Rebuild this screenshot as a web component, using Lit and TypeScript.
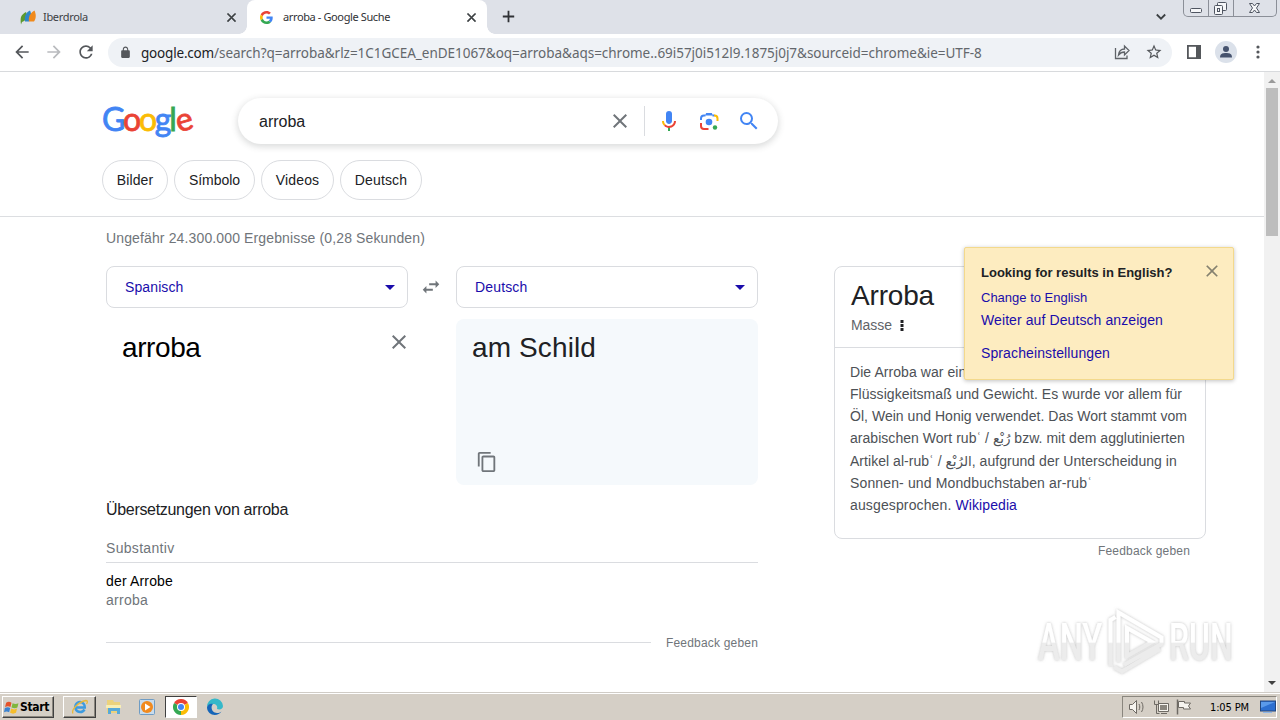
import { LitElement, html, css } from "lit";
import { customElement } from "lit/decorators.js";

const CLOSE = "M19 6.41L17.59 5 12 10.59 6.41 5 5 6.41 10.59 12 5 17.59 6.41 19 12 13.41 17.59 19 19 17.59 13.41 12z";
const BACK = "M20 11H7.83l5.59-5.59L12 4l-8 8 8 8 1.41-1.41L7.83 13H20v-2z";
const RELOAD = "M17.65 6.35A7.958 7.958 0 0012 4c-4.42 0-7.99 3.58-7.99 8s3.57 8 7.99 8c3.73 0 6.84-2.55 7.73-6h-2.08A5.99 5.99 0 0112 18c-3.31 0-6-2.69-6-6s2.69-6 6-6c1.66 0 3.14.69 4.22 1.78L13 11h7V4l-2.35 2.35z";
const LOCK = "M18 8h-1V6c0-2.76-2.24-5-5-5S7 3.24 7 6v2H6c-1.1 0-2 .9-2 2v10c0 1.1.9 2 2 2h12c1.1 0 2-.9 2-2V10c0-1.1-.9-2-2-2zM9 6c0-1.66 1.34-3 3-3s3 1.34 3 3v2H9z";
const STAR = "M22 9.24l-7.19-.62L12 2 9.19 8.63 2 9.24l5.46 4.73L5.82 21 12 17.27 18.18 21l-1.63-7.03L22 9.24zM12 15.4l-3.76 2.27 1-4.28-3.32-2.88 4.38-.38L12 6.1l1.71 4.04 4.38.38-3.32 2.88 1 4.28L12 15.4z";
const COPY = "M16 1H4c-1.1 0-2 .9-2 2v14h2V3h12V1zm3 4H8c-1.1 0-2 .9-2 2v14c0 1.1.9 2 2 2h11c1.1 0 2-.9 2-2V7c0-1.1-.9-2-2-2zm0 16H8V7h11v14z";
const SEARCH = "M15.5 14h-.79l-.28-.27A6.471 6.471 0 0016 9.5 6.5 6.5 0 109.5 16c1.61 0 3.09-.59 4.23-1.57l.27.28v.79l5 4.99L20.49 19l-4.99-5zm-6 0C7.01 14 5 11.99 5 9.5S7.01 5 9.5 5 14 7.01 14 9.5 11.99 14 9.5 14z";
const SWAP = "M6.99 11L3 15l3.99 4v-3H14v-2H6.99v-3zM21 9l-3.99-4v3H10v2h7.01v3L21 9z";

const icon = (cls: string, size: number, d: string) =>
  html`<svg class=${cls} width=${size} height=${size} viewBox="0 0 24 24" fill="currentColor"><path d=${d} /></svg>`;

const t = (cls: string, text: unknown) => html`<span class="t ${cls}">${text}</span>`;

@customElement("app-root")
export class AppRoot extends LitElement {
  static styles = css`
    :host { display: flex; flex-direction: column; width: 1280px; height: 720px; overflow: hidden; background: #fff;
      font-family: "Liberation Sans", Arial, sans-serif; font-size: 14px; color: #202124; }
    * { box-sizing: border-box; }
    svg { display: block; flex: none; }
    .t { white-space: pre; flex: none; }
    .grow { flex: 1; }

    .tt1 { letter-spacing: -.31px; } .tt2 { letter-spacing: -.38px; }
    .k1 { letter-spacing: .1px; } .k2 { letter-spacing: -.05px; } .k3, .k4, .s2 { letter-spacing: .16px; }
    .st { letter-spacing: .133px; } .s1 { letter-spacing: .113px; }
    .a1 { letter-spacing: -.4px; } .a2 { letter-spacing: .118px; }
    .h1 { letter-spacing: -.311px; } .h2 { letter-spacing: .313px; } .h3 { letter-spacing: .163px; } .h4 { letter-spacing: .255px; }
    .f { letter-spacing: .185px; }
    .ti { letter-spacing: -.174px; } .ki { letter-spacing: -.047px; }
    .p1 { letter-spacing: .064px; } .p2 { letter-spacing: .041px; } .p3 { letter-spacing: .028px; } .p4 { letter-spacing: .035px; }
    .p5 { letter-spacing: .035px; } .p6 { letter-spacing: .136px; } .p7 { letter-spacing: .131px; } .link { letter-spacing: .089px; color: #1a0dab; }
    .w2 { letter-spacing: .092px; } .w3 { letter-spacing: .112px; }
    .sta { letter-spacing: -.34px; }

    .tabs { display: flex; height: 34px; flex: none; background: #dee1e8; font: 11px "Noto Sans", sans-serif; color: #3c4043; }
    .tab { display: flex; align-items: center; height: 34px; }
    .tab1 { width: 247px; padding-left: 20px; }
    .tab .t { margin-bottom: 2px; }
    .tab1 .t { margin-left: 7px; }
    .tab2 { position: relative; width: 240px; padding-left: 13px; background: #fff; border-radius: 8px 8px 0 0; color: #2f3134; }
    .tab2::before, .tab2::after { content: ""; position: absolute; bottom: 0; width: 8px; height: 8px; }
    .tab2::before { left: -8px; background: radial-gradient(circle at 0 0, transparent 7.5px, #fff 8px); }
    .tab2::after { right: -8px; background: radial-gradient(circle at 100% 0, transparent 7.5px, #fff 8px); }
    .tab2 .t { margin-left: 10px; }
    .x { margin-left: auto; margin-right: 8px; color: #3c4043; stroke: currentColor; stroke-width: .8; }
    .plus { margin: 10px 0 0 15px; }
    .chev { margin: 13px 17px 0 0; }
    .winbtns { display: flex; width: 94px; height: 17px; margin-right: 3px; border: 1px solid #8b8f98; border-top: 0; border-radius: 0 0 5px 5px; }

    .toolbar { display: flex; align-items: center; height: 38px; flex: none; padding: 0 0 1px 12px; border-bottom: 1px solid #d8dadd; color: #54575b; }
    .toolbar .fwd { margin-left: 12px; color: #b9bbbe; }
    .toolbar .rel { margin-left: 12px; }
    .omni { display: flex; align-items: center; width: 1064px; height: 29px; margin-left: 12px; padding-left: 11px; border-radius: 15px; background: #eff2f6; font: 13.5px "Noto Sans", sans-serif; }
    .omni .t { margin-top: 2px; }
    .host { margin-left: 9px; color: #202124; letter-spacing: -.19px; }
    .path { color: #63676c; letter-spacing: -.03px; }
    .share { margin-right: 15px; }
    .omni .star { margin-right: 9px; }
    .side { margin-left: 14px; }
    .avatar { margin-left: 13px; }
    .dots { margin-left: 19px; }

    .view { display: flex; height: 620px; flex: none; }
    .page { position: relative; width: 1264px; }
    .bar { display: flex; flex-direction: column; align-items: center; justify-content: space-between; width: 16px; background: #f1f1f1; }
    .thumb { width: 12px; height: 148px; background: #bdbdbd; }
    .rest { flex: 1; }

    .head { height: 145px; border-bottom: 1px solid #dcdee1; padding: 26px 0 0 102px; }
    .row { display: flex; }
    .logo { width: 92px; height: 46px; font: 32px/41px Lato, sans-serif; white-space: nowrap; letter-spacing: -2.2px; -webkit-text-stroke: .8px; }
    .b { color: #4285f4; } .r { color: #ea4335; } .y { color: #fbbc05; } .g { color: #34a853; }
    .e { display: inline-block; transform: rotate(-16deg); }
    .search { display: flex; align-items: center; width: 540px; height: 46px; margin-left: 44px; padding: 0 17px 0 21px; border-radius: 23px; box-shadow: 0 2px 6px 1px rgba(60,64,67,.18); font-size: 16px; }
    .sq { margin-top: 1px; }
    .search .clr { color: #70757a; }
    .sep { width: 1px; height: 30px; margin: 0 12px; background: #dadce0; }
    .lens, .mag { margin-left: 16px; }
    .chips { display: flex; gap: 6px; margin-top: 16px; }
    .chip { display: flex; align-items: center; justify-content: center; height: 40px; border: 1px solid #dadce0; border-radius: 20px; }
    .c1 { width: 66px; } .c2 { width: 81px; } .c3 { width: 73px; } .c4 { width: 82px; }

    .body { display: flex; padding-left: 106px; }
    .left { width: 652px; }
    .stats { display: flex; height: 49px; padding-top: 13px; line-height: 16px; color: #70757a; }
    .langs { display: flex; align-items: center; height: 42px; }
    .sel { display: flex; align-items: center; width: 302px; height: 42px; padding: 0 12px 0 18px; border: 1px solid #dadce0; border-radius: 8px; color: #1a0dab; }
    .swap { margin: 0 14px 0 12px; color: #70757a; }
    .boxes { display: flex; justify-content: space-between; margin-top: 11px; }
    .src { display: flex; align-items: flex-start; justify-content: space-between; width: 302px; padding: 13px 0 0 16px; font-size: 28px; line-height: 32px; color: #000; }
    .src svg { margin: -2px -3px 0 0; color: #70757a; }
    .out { display: flex; flex-direction: column; justify-content: space-between; width: 302px; height: 166px; padding: 13px 16px 12px; border-radius: 8px; background: #f5f9fc; font-size: 28px; line-height: 32px; }
    .out svg { margin-left: 4px; color: #70757a; }
    .h { display: flex; margin-top: 15px; font-size: 16px; line-height: 20px; }
    .sub { display: flex; height: 34px; margin-top: 9px; padding-top: 10px; line-height: 18px; color: #70757a; border-bottom: 1px solid #dadce0; }
    .term { display: flex; margin-top: 9px; line-height: 19px; color: #000; }
    .back { display: flex; line-height: 19px; color: #70757a; }
    .fbrow { display: flex; align-items: center; gap: 15px; margin-top: 24px; font-size: 12px; line-height: 18px; color: #70757a; }
    .rule { flex: 1; height: 1px; margin-top: -2px; background: #dadce0; }

    .right { width: 372px; margin: 49px 0 0 76px; }
    .card { height: 273px; border: 1px solid #dadce0; border-radius: 8px; color: #4d5156; }
    .ctop { height: 81px; border-bottom: 1px solid #dadce0; padding: 12px 0 0 16px; color: #202124; }
    .title { display: flex; font-size: 28px; line-height: 34px; }
    .kind { display: flex; align-items: center; gap: 8px; height: 22px; margin-top: 1px; color: #5f6368; }
    .text { padding: 13px 0 0 15px; line-height: 22.12px; }
    .line { display: flex; }
    .ar { font-family: "DejaVu Sans", sans-serif; font-size: 13.5px; line-height: 1; }
    .fb2 { display: flex; justify-content: flex-end; padding: 4px 16px 0 0; font-size: 12px; line-height: 16px; color: #70757a; }

    .pop { position: absolute; left: 964px; top: 175px; width: 270px; height: 133px; padding: 16px 14px 0 16px; border: 1px solid #f3d98c; border-radius: 2px; background: #fdecc0; box-shadow: 0 1px 4px rgba(0,0,0,.25); color: #1a0dab; font-size: 14px; }
    .ptop { display: flex; justify-content: space-between; }
    .q { margin-top: 1px; font-size: 13px; font-weight: bold; line-height: 16px; color: #202124; }
    .pop .cx { margin: -3px -3px 0 0; color: #85816f; }
    .l1 { display: flex; margin-top: 8px; font-size: 13px; line-height: 17px; }
    .l2 { display: flex; margin-top: 5px; line-height: 18px; }
    .l3 { display: flex; margin-top: 15px; line-height: 18px; }
    .wm { position: absolute; left: 1030px; top: 530px; }

    .task { display: flex; align-items: center; height: 28px; flex: none; padding: 1px 3px 0 2px; background: #d5cfc6; border-top: 1px solid #d0ccc6; box-shadow: inset 0 1px #fff; font: 11px "DejaVu Sans Condensed", "DejaVu Sans", sans-serif; color: #000; }
    .btn { display: flex; align-items: center; justify-content: center; height: 22px; border: 1px solid; border-color: #fff #404040 #404040 #fff; box-shadow: inset -1px -1px #8a867e; }
    .start { justify-content: flex-start; width: 52px; padding-left: 1px; gap: 1px; font-size: 12px; font-weight: bold; }
    .ie { width: 33px; margin-left: 9px; }
    .on { width: 32px; background: #fff; border-color: #404040 #fff #fff #404040; box-shadow: none; }
    .m1 { margin: 0 16px 0 9px; } .m2 { margin-right: 10px; } .m3 { margin-left: 9px; }
    .tray { display: flex; align-items: center; width: 155px; height: 22px; padding: 0 0 0 5px; border: 1px solid; border-color: #8a867e #fff #fff #8a867e; }
    .clock { margin: 0 11px 0 16px; letter-spacing: -.13px; }
  `;

  render() {
    return html`
      <div class="tabs">
        <div class="tab tab1">
          <svg width="16" height="16" viewBox="0 0 16 16"><path d="M1 15.500C0 8 1 6 6 3c2 4 1 8-4 10z" fill="#5c9a2e"/><path d="M5 12.500c-1-5 1-9 5-11 2 4 1 8-1 11z" fill="#2f86c8"/><path d="M9 12.500c-1-5 2-9 5.500-11C16.500 6 16 10 14 12.500z" fill="#f08a1c"/></svg>
          ${t("tt1", "Iberdrola")}
          ${icon("x", 15, CLOSE)}
        </div>
        <div class="tab tab2">
          <svg width="13" height="13" viewBox="0 0 48 48"><path fill="#EA4335" d="M24 9.5c3.54 0 6.71 1.22 9.21 3.6l6.85-6.85C35.9 2.38 30.47 0 24 0 14.62 0 6.51 5.38 2.56 13.22l7.98 6.19C12.43 13.72 17.74 9.5 24 9.5z"/><path fill="#4285F4" d="M46.98 24.55c0-1.57-.15-3.09-.38-4.55H24v9.02h12.94c-.58 2.96-2.26 5.48-4.78 7.18l7.73 6c4.51-4.18 7.09-10.36 7.09-17.65z"/><path fill="#FBBC05" d="M10.53 28.59c-.48-1.45-.76-2.99-.76-4.59s.27-3.14.76-4.59l-7.98-6.19C.92 16.46 0 20.12 0 24s.92 7.54 2.56 10.78l7.97-6.19z"/><path fill="#34A853" d="M24 48c6.48 0 11.93-2.13 15.89-5.81l-7.73-6c-2.15 1.45-4.92 2.3-8.16 2.3-6.26 0-11.57-4.22-13.47-9.91l-7.98 6.19C6.51 42.62 14.62 48 24 48z"/></svg>
          ${t("tt2", "arroba - Google Suche")}
          ${icon("x", 15, CLOSE)}
        </div>
        <svg class="plus" width="13" height="13" viewBox="0 0 13 13" stroke="#303236" stroke-width="1.8"><path d="M6.5 .8v11.4M.8 6.5h11.4"/></svg>
        <span class="grow"></span>
        <svg class="chev" width="10" height="8" viewBox="0 0 10 8" fill="none" stroke="#3c4043" stroke-width="1.8"><path d="M.8 1.500L5 5.700 9.200 1.500"/></svg>
        <div class="winbtns">
          <svg width="92" height="16" viewBox="0 0 92 16" fill="none" stroke="#4f5561"><path d="M24.500 0v16M49.500 0v16" stroke="#8b8f98"/><rect x="6.500" y="8.500" width="11" height="4" rx="1" fill="#f5f6f8"/><rect x="33.500" y="2.500" width="9" height="8" rx="1" fill="#f5f6f8"/><rect x="30.500" y="5.500" width="8" height="9" rx="1" fill="#f5f6f8"/><rect x="33.500" y="8.500" width="2" height="3"/><path d="M65.500 3.500h3l2 2.500 2-2.500h3l-3 4.500 3 4.500h-3l-2-2.500-2 2.500h-3l3-4.500z" fill="#f5f6f8"/></svg>
        </div>
      </div>
      <div class="toolbar">
        ${icon("", 20, BACK)}
        <svg class="fwd" width="20" height="20" viewBox="0 0 24 24" fill="currentColor"><path d="M12 4l-1.410 1.410L16.170 11H4v2h12.170l-5.580 5.590L12 20l8-8z"/></svg>
        ${icon("rel", 20, RELOAD)}
        <div class="omni">
          ${icon("", 13, LOCK)}
          ${t("host", "google.com")}${t("path", "/search?q=arroba&rlz=1C1GCEA_enDE1067&oq=arroba&aqs=chrome..69i57j0i512l9.1875j0j7&sourceid=chrome&ie=UTF-8")}
          <span class="grow"></span>
          <svg class="share" width="16" height="16" viewBox="0 0 16 16" fill="none" stroke="#5f6368" stroke-width="1.300"><path d="M1.500 4v10.500h11.500v-3M4.500 11c.5-4 2.500-6 6-6V2l4.500 4.500-4.500 4.500V8c-2.500 0-4.500 1-6 3z"/></svg>
          ${icon("star", 18, STAR)}
        </div>
        <svg class="side" width="16" height="16" viewBox="0 0 16 16"><path d="M1.900 1.900h12.200v12.200H1.900z" fill="none" stroke="#54575b" stroke-width="1.800"/><path d="M10 1h5v14h-5z" fill="#54575b"/></svg>
        <svg class="avatar" width="22" height="22" viewBox="0 0 22 22"><circle cx="11" cy="11" r="11" fill="#dbe1ea"/><circle cx="11" cy="8" r="3" fill="#46536e"/><path d="M5 16.500c0-4 3-4.500 6-4.500s6 .5 6 4.500z" fill="#46536e"/></svg>
        <svg class="dots" width="4" height="14" viewBox="0 0 4 14" fill="#54575b"><circle cx="2" cy="2" r="1.600"/><circle cx="2" cy="7" r="1.600"/><circle cx="2" cy="12" r="1.600"/></svg>
      </div>
      <div class="view">
        <div class="page">
          <div class="head">
            <div class="row">
              <div class="logo"><span class="b">G</span><span class="r">o</span><span class="y">o</span><span class="b">g</span><span class="g">l</span><span class="r e">e</span></div>
              <div class="search">
                ${t("sq", "arroba")}
                <span class="grow"></span>
                ${icon("clr", 24, CLOSE)}
                <span class="sep"></span>
                <svg width="24" height="24" viewBox="0 0 24 24"><path fill="#4285f4" d="M12 15c1.660 0 3-1.310 3-2.970V5A3 3 0 009 5v7.030C9 13.690 10.340 15 12 15z"/><path fill="#34a853" d="M11 18.080h2V22h-2z"/><path fill="#fbbc05" d="M7.050 16.870C5.780 15.590 5 13.910 5 12h2c0 1.380.56 2.630 1.470 3.530z"/><path fill="#ea4335" d="M12 16.930a4.970 5.250 0 01-3.540-1.550l-1.410 1.490c1.260 1.340 3.020 2.130 4.950 2.130 3.870 0 6.990-2.920 6.990-7h-1.990c0 2.920-2.240 4.930-5 4.930z"/></svg>
                <svg class="lens" width="24" height="24" viewBox="0 0 24 24" fill="none" stroke-width="2"><circle cx="12" cy="13" r="3.300" fill="#4285f4"/><path d="M4 11V9.500a3 3 0 013-3H8.500M15.500 6.500h2" stroke="#4285f4"/><path d="M8 6.500L9.200 4h5.600L16 6.500z" fill="#4285f4"/><path d="M17 6.500h.5a3 3 0 013 3V12" stroke="#fbbc05"/><path d="M4 14v3a3 3 0 003 3H11.500" stroke="#ea4335"/><circle cx="18" cy="18.500" r="2.200" fill="#34a853"/></svg>
                <svg class="mag" width="24" height="24" viewBox="0 0 24 24" fill="#4285f4"><path d=${SEARCH}/></svg>
              </div>
            </div>
            <div class="chips">
              <div class="chip c1">${t("k1", "Bilder")}</div>
              <div class="chip c2">${t("k2", "Símbolo")}</div>
              <div class="chip c3">${t("k3", "Videos")}</div>
              <div class="chip c4">${t("k4", "Deutsch")}</div>
            </div>
          </div>
          <div class="body">
            <div class="left">
              <div class="stats">${t("st", "Ungefähr 24.300.000 Ergebnisse (0,28 Sekunden)")}</div>
              <div class="langs">
                <div class="sel">${t("s1", "Spanisch")}<span class="grow"></span><svg width="10" height="5" viewBox="0 0 10 5" fill="#1a0dab"><path d="M0 0h10L5 5z"/></svg></div>
                ${icon("swap", 22, SWAP)}
                <div class="sel">${t("s2", "Deutsch")}<span class="grow"></span><svg width="10" height="5" viewBox="0 0 10 5" fill="#1a0dab"><path d="M0 0h10L5 5z"/></svg></div>
              </div>
              <div class="boxes">
                <div class="src">${t("a1", "arroba")}${icon("", 24, CLOSE)}</div>
                <div class="out"><div class="row">${t("a2", "am Schild")}</div>${icon("", 22, COPY)}</div>
              </div>
              <div class="h">${t("h1", "Übersetzungen von arroba")}</div>
              <div class="sub">${t("h2", "Substantiv")}</div>
              <div class="term">${t("h3", "der Arrobe")}</div>
              <div class="back">${t("h4", "arroba")}</div>
              <div class="fbrow"><span class="rule"></span>${t("f", "Feedback geben")}</div>
            </div>
            <div class="right">
              <div class="card">
                <div class="ctop">
                  <div class="title">${t("ti", "Arroba")}</div>
                  <div class="kind">${t("ki", "Masse")}<svg width="4" height="11" viewBox="0 0 4 11" fill="#202124"><path d="M.5 0h3v3h-3zM.5 4h3v3h-3zM.5 8h3v3h-3z"/></svg></div>
                </div>
                <div class="text">
                  <div class="line">${t("p1", "Die Arroba war ein spanisch-portugiesisches")}</div>
                  <div class="line">${t("p2", "Flüssigkeitsmaß und Gewicht. Es wurde vor allem für")}</div>
                  <div class="line">${t("p3", "Öl, Wein und Honig verwendet. Das Wort stammt vom")}</div>
                  <div class="line">${t("p4", html`arabischen Wort rubʿ / <bdi class="ar">رُبْع</bdi> bzw. mit dem agglutinierten`)}</div>
                  <div class="line">${t("p5", html`Artikel al-rubʿ / <bdi class="ar">الرُبْع</bdi>, aufgrund der Unterscheidung in`)}</div>
                  <div class="line">${t("p6", "Sonnen- und Mondbuchstaben ar-rubʿ")}</div>
                  <div class="line">${t("p7", "ausgesprochen. ")}${t("link", "Wikipedia")}</div>
                </div>
              </div>
              <div class="fb2">${t("f", "Feedback geben")}</div>
            </div>
          </div>
          <div class="pop">
            <div class="ptop">${t("q", "Looking for results in English?")}${icon("cx", 20, CLOSE)}</div>
            <div class="l1">${t("w1", "Change to English")}</div>
            <div class="l2">${t("w2", "Weiter auf Deutsch anzeigen")}</div>
            <div class="l3">${t("w3", "Spracheinstellungen")}</div>
          </div>
          <svg class="wm" width="234" height="84" viewBox="0 0 234 84">
            <defs>
              <linearGradient id="wg" x1="0" y1="0" x2="0" y2="80" gradientUnits="userSpaceOnUse"><stop offset=".5" stop-color="#fff"/><stop offset=".52" stop-color="#ececec"/></linearGradient>
              <filter id="ws" x="-10%" y="-20%" width="120%" height="140%"><feDropShadow dx="0" dy="0" stdDeviation="1.600" flood-color="#888" flood-opacity=".55"/></filter>
            </defs>
            <g filter="url(#ws)" fill="url(#wg)" font-family="Roboto, sans-serif" font-size="51" font-weight="500">
              <text transform="translate(8 58) scale(.64 1)" fill="url(#wg2)">ANY</text>
              <text transform="translate(139 58) scale(.625 1)" fill="url(#wg2)">RUN</text>
              <g fill="none" stroke="url(#wg)" stroke-width="4">
                <path d="M80.500 64V18l5-3M88.500 60V10.500l43 25V42L94 63M84 65l8 4.500 38-22.500M97 26v28l25-14z"/>
              </g>
            </g>
            <defs><linearGradient id="wg2" x1="0" y1="-36" x2="0" y2="0" gradientUnits="userSpaceOnUse"><stop offset=".5" stop-color="#fff"/><stop offset=".54" stop-color="#ececec"/></linearGradient></defs>
          </svg>
        </div>
        <div class="bar">
          <svg width="16" height="16" viewBox="0 0 16 16"><path d="M4 11l4-4 4 4z" fill="#9a9a9a"/></svg>
          <div class="thumb"></div>
          <div class="rest"></div>
          <svg width="16" height="17" viewBox="0 0 16 17"><path d="M4 6h8l-4 4z" fill="#404040"/></svg>
        </div>
      </div>
      <div class="task">
        <div class="btn start">
          <svg width="15" height="15" viewBox="0 0 14 14"><path d="M2 2.500c2-1.500 3.500-1 5 0L6 6.500c-1.500-1-3-1-5 0z" fill="#e5532a"/><path d="M8 3c2 1 3.500 1 5.500 0l-1 4C11 8 9 8 7 7z" fill="#7fb63c"/><path d="M.8 7.500c2-1 3.500-1 5 0l-1 4C3 10.500 2 10.500 0 11.500z" fill="#3b82d0"/><path d="M6.700 8c2 1 3.500 1 5.500 0l-1 4c-2 1-3.500 1-5.500 0z" fill="#f5bd2c"/></svg>
          ${t("sta", "Start")}
        </div>
        <div class="btn ie">
          <svg width="18" height="18" viewBox="0 0 18 18" fill="none"><path d="M13.500 11.500A5 5 0 119 4a5 5 0 014.800 5.500H4.500" stroke="#3d9be0" stroke-width="2.500"/><path d="M2 15.500C0 12 7 4 15 2.500c2 0 1.500 2 .5 3.500" stroke="#e9b93a" stroke-width="1.300"/></svg>
        </div>
        <svg class="m1" width="18" height="18" viewBox="8 0 18 18"><path d="M10 2h6l1 2h6v11H10z" fill="#ecd27c"/><path d="M9 7h15v3H9z" fill="#f8eeb4"/><path d="M11 10h12v6h-3v-3h-6v3h-3z" fill="#58a9d8"/></svg>
        <svg class="m2" width="16" height="16" viewBox="0 0 16 16"><rect x=".5" y=".5" width="15" height="15" rx="1" fill="#c9dcec" stroke="#6f9cc4"/><circle cx="8" cy="8" r="6" fill="#f18a1e"/><path d="M6 4.500l5.500 3.500L6 11.500z" fill="#fff"/></svg>
        <div class="btn on">
          <svg width="16" height="16" viewBox="0 0 16 16"><path d="M8 8L1.070 4A8 8 0 0114.930 4z" fill="#ea4335"/><path d="M8 8l6.930-4A8 8 0 018 16z" fill="#fbbc05"/><path d="M8 8v8A8 8 0 011.070 4z" fill="#34a853"/><circle cx="8" cy="8" r="4" fill="#fff"/><circle cx="8" cy="8" r="3" fill="#4285f4"/></svg>
        </div>
        <svg class="m3" width="18" height="18" viewBox="0 0 18 18"><path d="M1 9a8 8 0 0116-1c0 3-3 4-6 3 1-3-1-5-4-5S2 7 1 9z" fill="#35b8c9"/><path d="M1 9c1-3 4-4 6-3-3 3-1 9 4 9 2 0 3-.5 4.500-1.500C12 19 1 18 1 9z" fill="#1565b8"/></svg>
        <span class="grow"></span>
        <div class="tray">
          <svg width="66" height="18" viewBox="0 0 66 18" fill="#f6f4ef" stroke="#6e6a64"><path d="M1.500 6.500h3l4-4v13l-4-4h-3z"/><path d="M11 6c1 2 1 4 0 6M13.500 4c2 3 2 7 0 10" fill="none"/><path d="M30.500 5.500h10v8h-10z"/><path d="M32 7h7v5h-7z" fill="#8a867e" stroke="none"/><path d="M33 15.500h6M26.500 2.500v4h4v-4M28.500 6.500v9h3" fill="none"/><path d="M49.500 1.500v15" stroke-width="1.500"/><path d="M50.500 3.500h6v1.500h6l-2 3 2 3h-7v-1.500h-5z"/></svg>
          ${t("clock", "1:05 PM")}
          <svg width="16" height="14" viewBox="0 0 16 14"><rect x=".5" y="1" width="15" height="10" fill="#2c6fd0" stroke="#23477e"/><path d="M1 2h14L1 8z" fill="#5a9aea"/><path d="M3 12.500h9" stroke="#8fb7e8"/></svg>
        </div>
      </div>
    `;
  }
}
